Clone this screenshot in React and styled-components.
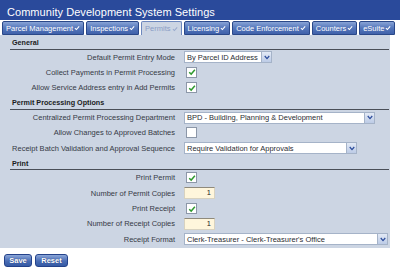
import React from "react";
import styled, { createGlobalStyle } from "styled-components";

const GlobalStyle = createGlobalStyle`
	body {
		margin: 0;
		background: #ffffff;
		font-family: "Liberation Sans", Arial, sans-serif;
	}
`;

const tabs = [
	{ name: "Parcel Management" },
	{ name: "Inspections" },
	{ name: "Permits", active: true },
	{ name: "Licensing" },
	{ name: "Code Enforcement" },
	{ name: "Counters" },
	{ name: "eSuite" },
];

function Check(props) {
	return (
		<svg width={props.size || 6} height={props.size || 6} viewBox="0 0 10 10">
			<path
				d="M1.5 5.2 L4 7.6 L8.6 2.2"
				fill="none"
				stroke={props.color || "#ffffff"}
				strokeWidth="1.8"
			/>
		</svg>
	);
}

function CheckBox() {
	return (
		<StyledCheckBox>
			<Check size={8} color="#2f9a2f" />
		</StyledCheckBox>
	);
}

function Select(props) {
	return (
		<StyledSelect width={props.width}>
			<StyledSelectText>{props.value}</StyledSelectText>
			<StyledArrow>
				<svg width="6" height="5" viewBox="0 0 8 6">
					<path d="M1 1 L4 4.5 L7 1" fill="none" stroke="#2b4b9b" strokeWidth="1.6" />
				</svg>
			</StyledArrow>
		</StyledSelect>
	);
}

function Row(props) {
	return (
		<StyledRow>
			<StyledLabel>{props.label}</StyledLabel>
			<StyledControl>{props.children}</StyledControl>
		</StyledRow>
	);
}

function App() {
	return (
		<StyledPage>
			<GlobalStyle />
			<StyledHeader>
				<StyledTitle>Community Development System Settings</StyledTitle>
			</StyledHeader>
			<StyledTabBar>
				{tabs.map((t) => (
					<StyledTab key={t.name} active={t.active}>
						{t.name}
						<Check color={t.active ? "#9aabcd" : "#ffffff"} />
					</StyledTab>
				))}
			</StyledTabBar>

			<StyledPanel>
				<StyledSectionHead>General</StyledSectionHead>
				<Row label="Default Permit Entry Mode">
					<Select width={88} value="By Parcel ID Address" />
				</Row>
				<Row label="Collect Payments in Permit Processing">
					<CheckBox />
				</Row>
				<Row label="Allow Service Address entry in Add Permits">
					<CheckBox />
				</Row>

				<StyledSectionHead>Permit Processing Options</StyledSectionHead>
				<Row label="Centralized Permit Processing Department">
					<Select width={191} value="BPD - Building, Planning & Development" />
				</Row>
				<Row label="Allow Changes to Approved Batches">
					<StyledEmptyBox />
				</Row>
				<Row label="Receipt Batch Validation and Approval Sequence">
					<Select width={173} value="Require Validation for Approvals" />
				</Row>

				<StyledSectionHead>Print</StyledSectionHead>
				<Row label="Print Permit">
					<CheckBox />
				</Row>
				<Row label="Number of Permit Copies">
					<StyledNumber>1</StyledNumber>
				</Row>
				<Row label="Print Receipt">
					<CheckBox />
				</Row>
				<Row label="Number of Receipt Copies">
					<StyledNumber>1</StyledNumber>
				</Row>
				<Row label="Receipt Format">
					<Select width={204} value="Clerk-Treasurer - Clerk-Treasurer's Office" />
				</Row>
			</StyledPanel>

			<StyledButtonBar>
				<StyledButton width={28}>Save</StyledButton>
				<StyledButton width={33}>Reset</StyledButton>
			</StyledButtonBar>
		</StyledPage>
	);
}

const StyledPage = styled.div`
	width: 400px;
	height: 270px;
	overflow: hidden;
`;
const StyledHeader = styled.div`
	height: 20px;
	background: #2a4a9b;
	padding-left: 7px;
	box-sizing: border-box;
	display: flex;
	align-items: center;
	padding-top: 3px;
`;
const StyledTitle = styled.h1`
	margin: 0;
	font-size: 11px;
	font-weight: normal;
	color: #ffffff;
	letter-spacing: 0.05px;
`;
const StyledTabBar = styled.div`
	display: flex;
	gap: 2px;
	padding: 1px 0 0 2px;
	height: 15px;
	box-sizing: border-box;
	align-items: flex-end;
`;
const StyledTab = styled.div`
	height: 14px;
	box-sizing: border-box;
	display: flex;
	align-items: center;
	gap: 1px;
	padding: 0 3px;
	font-size: 7.5px;
	color: ${(p) => (p.active ? "#8a9dc5" : "#ffffff")};
	background: ${(p) =>
		p.active
			? "#ccd5e3"
			: "linear-gradient(#88a3d6, #5577bb 50%, #3f61aa)"};
	border: 1px solid ${(p) => (p.active ? "#6c87bd" : "#2a4889")};
	border-bottom: ${(p) => (p.active ? "none" : "1px solid #2a4889")};
	border-radius: 2px 2px 0 0;
	white-space: nowrap;
`;
const StyledPanel = styled.div`
	width: 390px;
	background: #ccd5e3;
	padding: 0 0 1.5px 0;
	box-sizing: border-box;
`;
const StyledSectionHead = styled.div`
	margin: 0 1px 0 10px;
	padding: 3px 0 1.5px 2px;
	height: 9px;
	line-height: 9px;
	font-size: 7.2px;
	color: #1a1c22;
	font-weight: bold;
	border-bottom: 1px solid #4a4f58;
`;
const StyledRow = styled.div`
	display: grid;
	grid-template-columns: 175px 1fr;
	column-gap: 9px;
	height: 15.3px;
	align-items: center;
`;
const StyledLabel = styled.div`
	text-align: right;
	font-size: 7.5px;
	color: #363a46;
	white-space: nowrap;
`;
const StyledControl = styled.div`
	display: flex;
	align-items: center;
`;
const StyledCheckBox = styled.div`
	width: 9px;
	height: 9px;
	margin-left: 2px;
	background: #ffffff;
	border: 1px solid #8c97a8;
	display: flex;
	align-items: center;
	justify-content: center;
`;
const StyledEmptyBox = styled(StyledCheckBox)``;
const StyledSelect = styled.div`
	width: ${(p) => p.width}px;
	height: 12px;
	box-sizing: border-box;
	background: #ffffff;
	border: 1px solid #a5b3c8;
	display: flex;
	align-items: center;
	justify-content: space-between;
`;
const StyledSelectText = styled.span`
	font-size: 7.5px;
	color: #2a2d34;
	padding-left: 2px;
	white-space: nowrap;
	overflow: hidden;
`;
const StyledArrow = styled.span`
	width: 9px;
	height: 10px;
	background: linear-gradient(#e3eaf6, #bccbe6);
	border-left: 1px solid #a5b3c8;
	display: flex;
	align-items: center;
	justify-content: center;
`;
const StyledNumber = styled.div`
	width: 31px;
	height: 12px;
	box-sizing: border-box;
	background: #fff6dc;
	border: 1px solid #d8d2c0;
	border-top: 1px solid #8f8a7c;
	font-size: 7.5px;
	color: #1e1e1e;
	text-align: right;
	padding-right: 3px;
	line-height: 10px;
`;
const StyledButtonBar = styled.div`
	display: flex;
	gap: 3px;
	padding: 6px 0 0 4px;
`;
const StyledButton = styled.button`
	width: ${(p) => p.width}px;
	height: 13px;
	margin: 0;
	padding: 0;
	font-family: "Liberation Sans", Arial, sans-serif;
	font-size: 7.5px;
	font-weight: bold;
	color: #ffffff;
	background: linear-gradient(#8aa6d8, #4a6db5 55%, #355aa4);
	border: 1px solid #24428a;
	border-radius: 3px;
	text-shadow: 0 0 1px #1b326c;
`;

export default App;
